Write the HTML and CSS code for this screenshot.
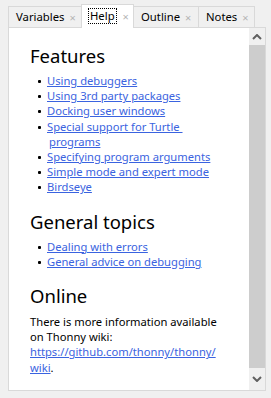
FILE: index.html
```html
<!DOCTYPE html>
<html>
<head>
<meta charset="utf-8">
<link rel="stylesheet" href="styles.css">
</head>
<body>
<div class="notebook">
  <div class="tabs">
    <div class="tab tab-variables"><span class="tab-label">Variables</span><span class="tab-close">×</span></div>
    <div class="tab tab-help selected"><span class="tab-label focus">Help</span><span class="tab-close">×</span></div>
    <div class="tab tab-outline"><span class="tab-label">Outline</span><span class="tab-close">×</span></div>
    <div class="tab tab-notes"><span class="tab-label">Notes</span><span class="tab-close">×</span></div>
  </div>
  <div class="panel">
    <div class="content">
      <h1>Features</h1>
      <ul>
        <li><a href="#">Using debuggers</a></li>
        <li><a href="#">Using 3rd party packages</a></li>
        <li><a href="#">Docking user windows</a></li>
        <li><a href="#">Special support for Turtle&nbsp;</a><br><a href="#" class="cont">programs</a></li>
        <li><a href="#">Specifying program arguments</a></li>
        <li><a href="#">Simple mode and expert mode</a></li>
        <li><a href="#">Birdseye</a></li>
      </ul>
      <h1>General topics</h1>
      <ul>
        <li><a href="#">Dealing with errors</a></li>
        <li><a href="#">General advice on debugging</a></li>
      </ul>
      <h1 class="online">Online</h1>
      <p>There is more information available<br>on Thonny wiki:<br><a href="#">https://github.com/thonny/thonny/</a><br><a href="#">wiki</a>.</p>
    </div>
    <div class="scrollbar">
      <div class="arrow">
        <svg width="10" height="6" viewBox="0 0 10 6"><path d="M1 5 L5 1 L9 5" fill="none" stroke="#606060" stroke-width="2"/></svg>
      </div>
      <div class="thumb"></div>
      <div class="arrow arrow-down">
        <svg width="10" height="6" viewBox="0 0 10 6"><path d="M1 1 L5 5 L9 1" fill="none" stroke="#606060" stroke-width="2"/></svg>
      </div>
    </div>
  </div>
</div>
</body>
</html>
```
FILE: styles.css
```css
html, body {
  margin: 0;
  padding: 0;
  background: #f0f0f0;
}
body {
  font-family: "Noto Sans", "Open Sans", sans-serif;
  color: #000;
  width: 271px;
  height: 398px;
  overflow: hidden;
}
.notebook {
  padding: 4px 5px 0 8px;
}
.tabs {
  display: flex;
  align-items: flex-end;
  height: 23px;
  position: relative;
  z-index: 1;
}
.tab {
  box-sizing: border-box;
  height: 21px;
  display: flex;
  align-items: center;
  border: 1px solid #d9d9d9;
  border-bottom: none;
  background: #f0f0f0;
  font-size: 11.3px;
  padding: 0 0 0 7px;
  margin-left: -1px;
}
.tab:first-child { margin-left: 0; }
.tab-variables { width: 74px; }
.tab-help { width: 53px; }
.tab-outline { width: 66px; }
.tab-notes { width: 57px; }
.tab.selected {
  height: 24px;
  background: #fff;
  margin-bottom: -1px;
  padding-bottom: 1px;
}
.tab-label {
  color: #000;
  line-height: 14px;
}
.tab-label.focus {
  outline: 1px dotted #000;
  outline-offset: 0;
  padding: 0 1px;
}
.tab-close {
  color: #b4b4b4;
  font-size: 11px;
  margin-left: 5px;
}
.tab-help .tab-close { margin-left: 7px; }
.panel {
  box-sizing: border-box;
  width: 258px;
  height: 364px;
  border: 1px solid #d9d9d9;
  background: #fff;
  display: flex;
}
.content {
  flex: 1;
  padding: 16px 0 0 21px;
  overflow: hidden;
}
h1 {
  font-size: 18.5px;
  font-weight: normal;
  margin: 0 0 5px 0;
  line-height: 24px;
}
h1.online { margin-bottom: 6px; }
ul {
  list-style: none;
  margin: 0 0 15px 0;
  padding: 0 0 0 8px;
  font-size: 11.2px;
  line-height: 15.2px;
}
li {
  position: relative;
  padding-left: 9px;
  white-space: nowrap;
}
li::before {
  content: "";
  position: absolute;
  left: 0;
  top: 7px;
  width: 3px;
  height: 3px;
  border-radius: 1px;
  background: #000;
}
a {
  color: #3a63e0;
  text-decoration: underline;
}
a.cont { margin-left: 2px; }
p {
  margin: 0;
  font-size: 11.2px;
  line-height: 15.2px;
  white-space: nowrap;
}
.scrollbar {
  width: 16px;
  display: flex;
  flex-direction: column;
  background: #f0f0f0;
}
.arrow {
  height: 17px;
  display: flex;
  align-items: center;
  justify-content: center;
}
.arrow-down { height: 22px; }
.thumb {
  flex: 1;
  background: #cdcdcd;
}
```
